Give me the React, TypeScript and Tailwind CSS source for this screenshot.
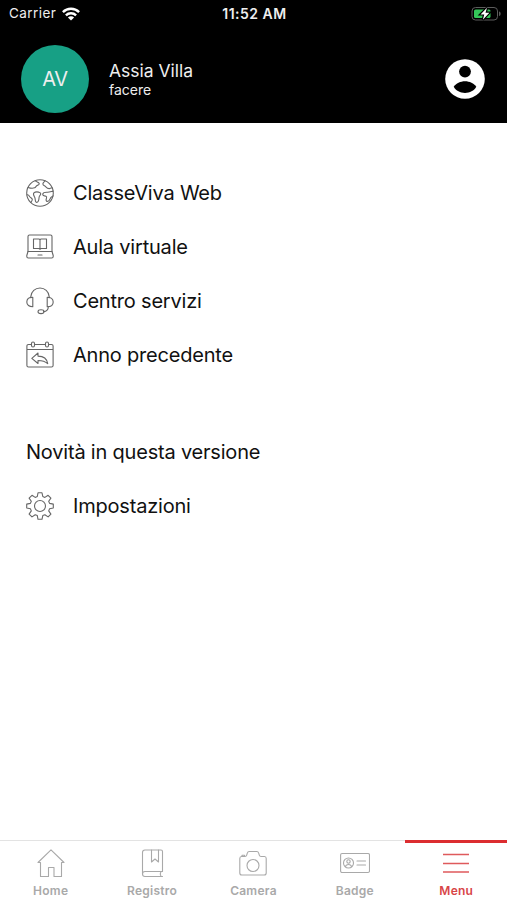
import type { ReactNode } from "react";

interface IconProps {
  className?: string;
}

const LINE = {
  fill: "none",
  stroke: "currentColor",
  strokeWidth: 1.1,
  strokeLinejoin: "round",
  strokeLinecap: "round",
} as const;

function WifiIcon({ className }: IconProps) {
  return (
    <svg viewBox="0 0 18 14" className={className} fill="none" stroke="currentColor" strokeWidth="2.4">
      <path d="M0.9 5.1a11.5 11.5 0 0 1 16.2 0" />
      <path d="M3.9 8.4a7.2 7.2 0 0 1 10.2 0" />
      <path d="M9 13.6 5.9 10.5a4.4 4.4 0 0 1 6.2 0z" fill="currentColor" stroke="none" />
    </svg>
  );
}

function BatteryIcon({ className }: IconProps) {
  return (
    <svg viewBox="0 0 32 16" className={className}>
      <rect x="2" y="1.5" width="25.5" height="12.5" rx="3.5" fill="none" stroke="#5c5c5c" />
      <path d="M29 5.5c2.200.6 2.200 3.900 0 4.500z" fill="#5c5c5c" />
      <rect x="4" y="3.500" width="16.500" height="8.500" rx="1.600" fill="#34c759" />
      <path
        d="M17 1.800 10.500 8.400h3.800l-1.500 5.400 6.600-7h-3.900z"
        fill="#fff"
        stroke="#000"
        strokeWidth="2.4"
        paintOrder="stroke"
      />
    </svg>
  );
}

function AccountIcon({ className }: IconProps) {
  return (
    <svg viewBox="0 0 40 40" className={className}>
      <circle cx="20" cy="20" r="19.8" fill="#fff" />
      <circle cx="20" cy="12.6" r="5.9" fill="#000" />
      <path d="M8.7 27.8C11 24.400 15.500 22.300 20 22.300s9 2.100 11.300 5.500C29 31.800 24.800 34 20 34s-9-2.200-11.300-6.200z" fill="#000" />
    </svg>
  );
}

function GlobeIcon() {
  return (
    <svg viewBox="0 0 28 28" className="size-7" {...LINE}>
      <circle cx="14" cy="14" r="13.3" />
      <path d="M2.2 8.4c2.4.9 4.4 1.1 6.4.4 1.2-.4 1.5-2 2.8-2.4 1.6-.5 2.400-1.500 1.400-2.600-.7-.8-2.400-.9-3.400-1.900" />
      <path d="M19 1.700c-.7 1.600-2 1.700-2.100 3.200 0 1.500 1.700 1.700 2.600 2.600 1.200 1.300 1.900 2.400 4.100 2.100l2.400-.9" />
      <path d="M1 15.800c1.100-.2 1.900.4 2.400 1.400.8 1.600 2.700 1.600 2.900 3.200.1 1.100-.8 1.900-1.400 3" />
      <path d="M8.100 13.700c1.300-1.200 4.200-1.100 5.800-.1 1.300.8.9 2-.1 3-1.300 1.300-.4 2.800-1.200 4.800-.5 1.400-1.700 2.700-2.700 1.600-1-1.200-.3-3-1.300-4.900-.8-1.400-2-3.100-.5-4.400z" />
      <path d="M27.100 12.100c-2.200.5-3.800 1-5.500 1.100-2 .1-4.300-.2-4.800 1.700-.5 1.800 1.800 2 3.200 2.400 1.400.5.4 2.100.1 3.300-.2 1.200.6 2 1.800 1.700 1.900-.5 2-2.800 3.300-4.100l1.900-1.300" />
    </svg>
  );
}

function LaptopIcon() {
  return (
    <svg viewBox="0 0 28 28" className="size-7" {...LINE}>
      <path d="M2 18.500V3.500q0-1.500 1.500-1.500h21q1.500 0 1.500 1.500v15" />
      <path d="M2 18.500h24l1.200 4v1q0 1.500-1.500 1.500H2.300q-1.500 0-1.500-1.500v-1z" />
      <path d="M12 22h4" />
      <path d="M7.500 6H13l1 .6 1-.6h5.500v9.500H15l-1 .7-1-.7H7.500zM14 6.600v9.500" />
    </svg>
  );
}

function HeadsetIcon() {
  return (
    <svg viewBox="0 0 28 28" className="size-7" {...LINE}>
      <path d="M4.800 10.700V9.600C5.200 4.500 9.200 1 14 1s8.800 3.500 9.200 8.600v1.100" />
      <path d="M6.800 10.200v9.600C3.200 19.800.8 18 .8 15s2.400-4.800 6-4.800zM21.200 10.200v9.600c3.600 0 6-1.800 6-4.800s-2.400-4.800-6-4.800z" />
      <path d="M22.300 19.800c0 3-1.600 4.600-4.700 4.800" />
      <ellipse cx="15" cy="24.7" rx="3" ry="1.9" />
    </svg>
  );
}

function CalendarIcon() {
  return (
    <svg viewBox="0 0 28 28" className="size-7" {...LINE}>
      <path d="M5.200 3.500H2.500q-1.600 0-1.600 1.600v19.300q0 1.600 1.600 1.600h23q1.600 0 1.600-1.600V5.100q0-1.600-1.600-1.600h-2.700M8.800 3.500h10.400M1 8.500h26" />
      <rect x="5.5" y="1" width="3" height="5" rx="1.5" />
      <rect x="19.5" y="1" width="3" height="5" rx="1.5" />
      <path d="M5.800 17.300 12 12v3.100c5.300 0 9 2.700 9.700 7.600-2.600-2.500-5.500-3.200-9.700-3.200v3z" />
    </svg>
  );
}

function GearIcon() {
  return (
    <svg viewBox="0 0 28 28" className="size-7" {...LINE}>
      <circle cx="14" cy="14" r="5.5" />
      <path d="M12 .8h4l.8 3.700 2.100.9 3.200-2.100 2.800 2.800-2.200 3.200.9 2.100 3.700.7v3.900l-3.700.8-.9 2.100 2.200 3.200-2.800 2.800-3.200-2.200-2.100.9-.8 3.700h-4l-.7-3.700-2.100-.9L6 24.900l-2.900-2.800 2.200-3.200-.9-2.100-3.700-.8v-3.900l3.700-.7.9-2.100-2.200-3.200L6 3.300l3.200 2.100 2.100-.9z" />
    </svg>
  );
}

function HomeIcon() {
  return (
    <svg viewBox="0 0 30 30" className="size-[30px]" {...LINE}>
      <path d="M4.500 13.500H2L15 .8l13 12.700h-2.500V27.500H18v-9h-5.500v9h-8z" />
    </svg>
  );
}

function RegisterIcon() {
  return (
    <svg viewBox="0 0 30 30" className="size-[30px]" {...LINE}>
      <path d="M25.500 22.500v-20q0-1.500-1.500-1.500H8Q5.500 1 5.500 3.500V25q0 2.500 2.500 2.500h17.500M8 22.500h17.500M8 22.500Q5.500 22.500 5.500 25M24 22.500q-1.500 2.500 0 5" />
      <path d="M14.500 1v12l3.500-3 3.500 3V1" />
    </svg>
  );
}

function CameraIcon() {
  return (
    <svg viewBox="0 0 30 30" className="size-[30px]" {...LINE}>
      <path d="M3.500 7.500H7q1.300 0 1.700-1.400l.7-2.200q.4-1.400 1.800-1.400h7.600q1.400 0 1.800 1.400l.7 2.200q.4 1.400 1.700 1.400h3.500q1.700 0 1.700 2v14.500q0 2-2 2h-22.400q-2 0-2-2V9.500q0-2 1.700-2z" />
      <path d="M4 7.300V6.200h2.500v1.100" />
      <circle cx="15" cy="16.500" r="6" />
    </svg>
  );
}

function BadgeIcon() {
  return (
    <svg viewBox="0 0 30 30" className="size-[30px]" {...LINE}>
      <rect x=".6" y="4.500" width="28.900" height="19" rx="1.500" />
      <circle cx="8.500" cy="14" r="5" />
      <circle cx="8.500" cy="12.500" r="1.700" />
      <path d="M5.500 17.800q.3-2.300 3-2.300t3 2.300M17 12h8.500M17 16h8.500" />
    </svg>
  );
}

function MenuIcon() {
  return (
    <svg viewBox="0 0 30 30" className="size-[30px]" fill="none" stroke="#df5a5c" strokeWidth="1.3">
      <path d="M2 5.500h26M2 14.500h26M2 23h26" />
    </svg>
  );
}

const MENU_ITEMS = [
  { label: "ClasseViva Web", icon: <GlobeIcon /> },
  { label: "Aula virtuale", icon: <LaptopIcon /> },
  { label: "Centro servizi", icon: <HeadsetIcon /> },
  { label: "Anno precedente", icon: <CalendarIcon /> },
];

const TABS = [
  { label: "Home", icon: <HomeIcon />, active: false },
  { label: "Registro", icon: <RegisterIcon />, active: false },
  { label: "Camera", icon: <CameraIcon />, active: false },
  { label: "Badge", icon: <BadgeIcon />, active: false },
  { label: "Menu", icon: <MenuIcon />, active: true },
];

function MenuRow({ label, icon }: { label: string; icon: ReactNode }) {
  return (
    <li className="flex h-[53.75px] items-center gap-[19px]">
      <span className="text-[#666]">{icon}</span>
      <span className="text-xl leading-6 tracking-[-0.2px]">{label}</span>
    </li>
  );
}

export default function App() {
  return (
    <div className="flex h-[900px] w-[507px] flex-col bg-white font-['Inter',sans-serif] text-[#111]">
      <header className="h-[123px] bg-black text-[#eee]">
        <div className="grid h-[27px] grid-cols-3 items-center pr-[5px] pl-[9px] text-[13.5px]">
          <div className="flex items-center gap-1.5">
            <span className="tracking-[0.45px]">Carrier</span>
            <WifiIcon className="h-3.5 w-[18px] text-white" />
          </div>
          <span className="-ml-0.5 text-center text-sm font-semibold tracking-[0.5px]">11:52 AM</span>
          <BatteryIcon className="h-4 w-8 justify-self-end" />
        </div>
        <div className="flex items-center pt-[18px] pr-[22px] pl-[21px]">
          <div className="flex size-[68px] items-center justify-center rounded-full bg-[#17a085] text-xl tracking-[-0.3px]">
            AV
          </div>
          <div className="ml-5 flex-1">
            <div className="text-[17.5px] leading-[21px]">Assia Villa</div>
            <div className="text-sm leading-[18px]">facere</div>
          </div>
          <AccountIcon className="size-10" />
        </div>
      </header>

      <main className="flex-1 px-[26px] pt-[43.5px]">
        <ul>
          {MENU_ITEMS.map((item) => (
            <MenuRow key={item.label} label={item.label} icon={item.icon} />
          ))}
        </ul>
        <div className="mt-11 flex h-[53.75px] items-center text-xl leading-6 tracking-[-0.2px]">
          Novità in questa versione
        </div>
        <ul>
          <MenuRow label="Impostazioni" icon={<GearIcon />} />
        </ul>
      </main>

      <nav className="grid h-[60px] grid-cols-5">
        {TABS.map(({ label, icon, active }) => (
          <div
            key={label}
            className={
              active
                ? "-ml-px flex flex-col items-center border-t-[3px] border-[#dc2d30] pt-1.5 pl-px text-[#d84548]"
                : "flex flex-col items-center border-t border-[#e3e3e3] pt-2 text-[#a9a9a9]"
            }
          >
            {icon}
            <span className="mt-1 text-xs leading-4 font-semibold tracking-[0.25px]">{label}</span>
          </div>
        ))}
      </nav>
    </div>
  );
}
